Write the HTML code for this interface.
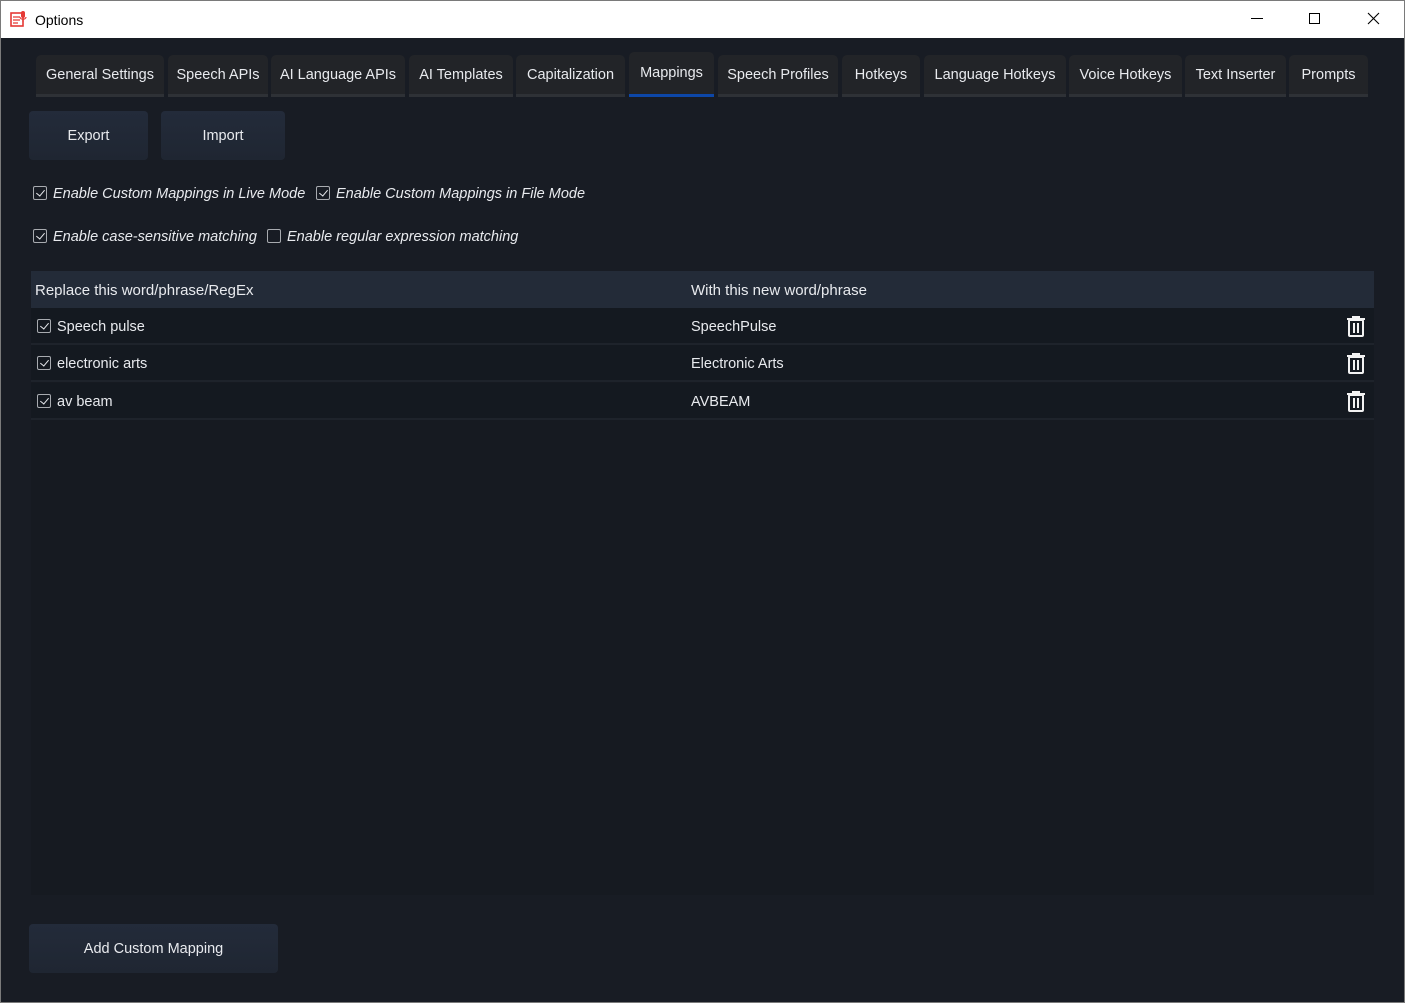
<!DOCTYPE html>
<html><head><style>
*{margin:0;padding:0;box-sizing:border-box}
body{width:1405px;height:1003px;background:#181c24;font-family:"Liberation Sans",sans-serif;color:#e8eaee;position:relative;overflow:hidden}
.frame{position:absolute;left:0;top:0;width:1405px;height:1003px;border:1px solid #7a7a7a;pointer-events:none;z-index:9}
.title{position:absolute;left:0;top:0;width:1405px;height:38px;background:#fff;color:#000;font-size:14px}
.abs{position:absolute}
.tab{position:absolute;top:55px;height:42px;background:#222428;border-radius:5px 5px 0 0;border-bottom:3px solid #2e3136;font-size:14.5px;text-align:center;line-height:41px;color:#e8eaee}
.tab.sel{top:52px;height:45px;border-bottom-color:#0d47a8;line-height:43px}
.btn{position:absolute;background:linear-gradient(#232b3a,#1f2632);border-radius:4px;font-size:14.5px;text-align:center;color:#e8eaee}
.cb{display:inline-block;width:14px;height:14px;border:1.5px solid #a8abb0;border-radius:2px;vertical-align:middle;position:relative;margin-right:7px;top:-1px;left:1px}
.cb.on::after{content:"";position:absolute;left:3.5px;top:0.5px;width:4px;height:7px;border:solid #e8eaee;border-width:0 1.6px 1.6px 0;transform:rotate(40deg)}
.opt{position:absolute;font-style:italic;font-size:14.5px;color:#e8eaee}
.row{position:absolute;left:31px;width:1343px;height:37px;background:#141920;border-bottom:2px solid #1e232b;font-size:14.5px;line-height:39px}
</style></head><body>
<div class="frame"></div>
<div class="title">
<svg class="abs" style="left:10px;top:10px" width="18" height="18" viewBox="0 0 18 18"><rect x="1" y="3" width="12" height="13" fill="none" stroke="#e53935" stroke-width="1.6"/><path d="M3 7h7M3 10h7M3 13h5" stroke="#e53935" stroke-width="1.3"/><rect x="11" y="1" width="4" height="7" rx="2" fill="#e53935"/><path d="M10 7c0 3 6 3 6 0M13 10v2" stroke="#e53935" stroke-width="1.2" fill="none"/></svg>
<span class="abs" style="left:35px;top:12px">Options</span>
<div class="abs" style="left:1251px;top:18px;width:12px;height:1px;background:#000"></div>
<div class="abs" style="left:1309px;top:13px;width:11px;height:11px;border:1px solid #000"></div>
<svg class="abs" style="left:1367px;top:12px" width="13" height="13"><path d="M1 1L12 12M12 1L1 12" stroke="#000" stroke-width="1.1"/></svg>
</div>
<div class="tab" style="left:36px;width:128px">General Settings</div>
<div class="tab" style="left:168px;width:100px">Speech APIs</div>
<div class="tab" style="left:271px;width:134px">AI Language APIs</div>
<div class="tab" style="left:409px;width:104px">AI Templates</div>
<div class="tab" style="left:516px;width:109px">Capitalization</div>
<div class="tab sel" style="left:629px;width:85px">Mappings</div>
<div class="tab" style="left:718px;width:120px">Speech Profiles</div>
<div class="tab" style="left:842px;width:78px">Hotkeys</div>
<div class="tab" style="left:924px;width:142px">Language Hotkeys</div>
<div class="tab" style="left:1069px;width:113px">Voice Hotkeys</div>
<div class="tab" style="left:1185px;width:101px">Text Inserter</div>
<div class="tab" style="left:1289px;width:79px">Prompts</div>
<div class="btn" style="left:29px;top:111px;width:119px;height:49px;line-height:51px">Export</div>
<div class="btn" style="left:161px;top:111px;width:124px;height:49px;line-height:51px">Import</div>
<div class="opt" style="left:32px;top:186px"><span class="cb on"></span>Enable Custom Mappings in Live Mode</div>
<div class="opt" style="left:315px;top:186px"><span class="cb on"></span>Enable Custom Mappings in File Mode</div>
<div class="opt" style="left:32px;top:229px"><span class="cb on"></span>Enable case-sensitive matching</div>
<div class="opt" style="left:266px;top:229px"><span class="cb"></span>Enable regular expression matching</div>
<div class="abs" style="left:31px;top:271px;width:1343px;height:624px;background:#161a21"></div>
<div class="abs" style="left:31px;top:271px;width:1343px;height:37px;background:#232b38;font-size:15px;line-height:40px"><span class="abs" style="left:4px">Replace this word/phrase/RegEx</span><span class="abs" style="left:660px">With this new word/phrase</span></div>
<div class="row" style="top:308px"><span class="abs" style="left:5px"><span class="cb on"></span>Speech pulse</span><span class="abs" style="left:660px">SpeechPulse</span></div>
<div class="row" style="top:345px"><span class="abs" style="left:5px"><span class="cb on"></span>electronic arts</span><span class="abs" style="left:660px">Electronic Arts</span></div>
<div class="row" style="top:383px"><span class="abs" style="left:5px"><span class="cb on"></span>av beam</span><span class="abs" style="left:660px">AVBEAM</span></div>
<svg class="abs" style="left:1346px;top:316px" width="20" height="100" viewBox="0 0 20 100" xmlns:xlink="http://www.w3.org/1999/xlink">
<g fill="none" stroke="#f2f2f2" stroke-width="2"><g id="t"><path d="M1 3h18M7 3V1h6v2"/><rect x="3" y="4" width="14" height="16" rx="1"/><path d="M8 7v10M12 7v10"/></g><use xlink:href="#t" y="37"/><use xlink:href="#t" y="75"/></g></svg>
<div class="btn" style="left:29px;top:924px;width:249px;height:49px;line-height:51px">Add Custom Mapping</div>
</body></html>
